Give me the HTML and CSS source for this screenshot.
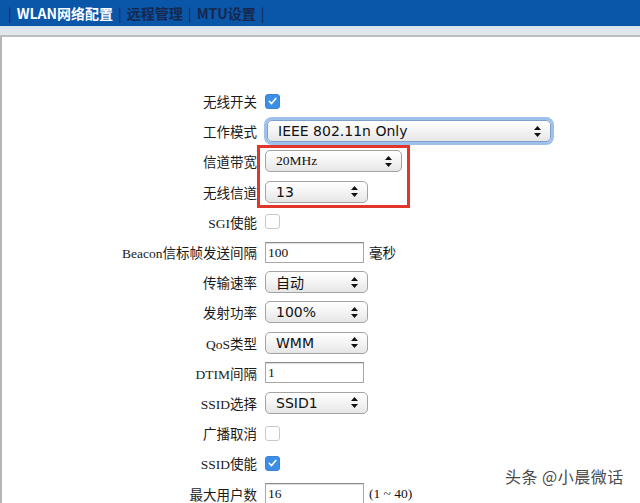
FILE: index.html
```html
<!DOCTYPE html>
<html lang="zh-CN">
<head>
<meta charset="utf-8">
<title>WLAN网络配置</title>
<link rel="stylesheet" href="styles.css">
</head>
<body>
<header class="topbar">
  <span class="sep">|</span><span class="tab active">WLAN网络配置</span><span class="sep">|</span><span class="tab">远程管理</span><span class="sep">|</span><span class="tab">MTU设置</span><span class="sep">|</span>
</header>
<div class="band"></div>
<main class="panel">
  <form class="form">
    <label class="lbl">无线开关</label>
    <div class="ctl"><span class="cb checked"><svg viewBox="0 0 14 14" width="14" height="14"><path d="M3.5 7.3 L6 9.8 L10.6 4.2" fill="none" stroke="#fff" stroke-width="1.7" stroke-linecap="round" stroke-linejoin="round"/></svg></span></div>

    <label class="lbl">工作模式</label>
    <div class="ctl"><div class="sel focus w-mode"><span>IEEE 802.11n Only</span><svg class="arr" viewBox="0 0 7 11" width="7" height="11"><path d="M3.5 0 L7 4 L0 4 Z M3.5 11 L7 7 L0 7 Z" fill="#111"/></svg></div></div>

    <label class="lbl">信道带宽</label>
    <div class="ctl"><div class="sel w-bw serif"><span>20MHz</span><svg class="arr" viewBox="0 0 7 11" width="7" height="11"><path d="M3.5 0 L7 4 L0 4 Z M3.5 11 L7 7 L0 7 Z" fill="#111"/></svg></div></div>

    <label class="lbl">无线信道</label>
    <div class="ctl"><div class="sel w-sm"><span>13</span><svg class="arr" viewBox="0 0 7 11" width="7" height="11"><path d="M3.5 0 L7 4 L0 4 Z M3.5 11 L7 7 L0 7 Z" fill="#111"/></svg></div></div>

    <label class="lbl">SGI使能</label>
    <div class="ctl"><span class="cb"></span></div>

    <label class="lbl">Beacon信标帧发送间隔</label>
    <div class="ctl"><span class="inp">100</span><span class="unit">毫秒</span></div>

    <label class="lbl">传输速率</label>
    <div class="ctl"><div class="sel w-sm"><span>自动</span><svg class="arr" viewBox="0 0 7 11" width="7" height="11"><path d="M3.5 0 L7 4 L0 4 Z M3.5 11 L7 7 L0 7 Z" fill="#111"/></svg></div></div>

    <label class="lbl">发射功率</label>
    <div class="ctl"><div class="sel w-sm"><span>100%</span><svg class="arr" viewBox="0 0 7 11" width="7" height="11"><path d="M3.5 0 L7 4 L0 4 Z M3.5 11 L7 7 L0 7 Z" fill="#111"/></svg></div></div>

    <label class="lbl">QoS类型</label>
    <div class="ctl"><div class="sel w-sm"><span>WMM</span><svg class="arr" viewBox="0 0 7 11" width="7" height="11"><path d="M3.5 0 L7 4 L0 4 Z M3.5 11 L7 7 L0 7 Z" fill="#111"/></svg></div></div>

    <label class="lbl">DTIM间隔</label>
    <div class="ctl"><span class="inp">1</span></div>

    <label class="lbl">SSID选择</label>
    <div class="ctl"><div class="sel w-sm"><span>SSID1</span><svg class="arr" viewBox="0 0 7 11" width="7" height="11"><path d="M3.5 0 L7 4 L0 4 Z M3.5 11 L7 7 L0 7 Z" fill="#111"/></svg></div></div>

    <label class="lbl">广播取消</label>
    <div class="ctl"><span class="cb"></span></div>

    <label class="lbl">SSID使能</label>
    <div class="ctl"><span class="cb checked"><svg viewBox="0 0 14 14" width="14" height="14"><path d="M3.5 7.3 L6 9.8 L10.6 4.2" fill="none" stroke="#fff" stroke-width="1.7" stroke-linecap="round" stroke-linejoin="round"/></svg></span></div>

    <label class="lbl">最大用户数</label>
    <div class="ctl"><span class="inp">16</span><span class="unit">(1 ~ 40)</span></div>
  </form>
  <div class="mark"></div>
</main>
<div class="watermark">头条 @小晨微话</div>
</body>
</html>
```
FILE: styles.css
```css
html, body {
  margin: 0;
  padding: 0;
  background: #fff;
  height: 503px;
  overflow: hidden;
}
body {
  font-family: "Liberation Serif", "Noto Sans CJK SC", serif;
  color: #111;
  position: relative;
}
.topbar {
  height: 26px;
  background: #0a56a8;
  display: flex;
  align-items: center;
  padding-left: 6px;
  font-family: "Noto Sans CJK SC", "Noto Sans", sans-serif;
  font-size: 14px;
  font-weight: 700;
  color: #17284f;
}
.sep {
  padding: 0 5px 0 2px;
  font-weight: 400;
}
.tab { padding-right: 3px; }
.tab.active { color: #fff; }
.band {
  height: 9px;
  background: linear-gradient(#d9e3ee, #e3e7ec);
  border-bottom: 2px solid #bdbdbd;
}
.panel {
  position: relative;
  border-left: 2px solid #b5b5b5;
  height: 466px;
  box-sizing: border-box;
  padding-top: 49px;
}
.form {
  display: grid;
  grid-template-columns: 255px 1fr;
  grid-auto-rows: 30.2px;
  column-gap: 8px;
}
.lbl {
  text-align: right;
  align-self: center;
  font-size: 13.5px;
  color: #1a1a1a;
  white-space: nowrap;
}
.ctl {
  display: flex;
  align-items: center;
  gap: 5px;
}
.cb {
  width: 13px;
  height: 13px;
  border: 1px solid #c9c9c9;
  border-radius: 3px;
  background: #fff;
  display: flex;
  align-items: center;
  justify-content: center;
  box-sizing: content-box;
}
.cb.checked {
  background: #3d8ee6;
  border-color: #3d82d4;
}
.cb svg { display: block; }
.sel {
  height: 22px;
  box-sizing: border-box;
  border: 1px solid #a3a3a3;
  border-radius: 5px;
  background: linear-gradient(#ffffff, #f4f4f4 50%, #e6e6e6);
  display: flex;
  align-items: center;
  justify-content: space-between;
  padding: 0 9px 0 10px;
  font-family: "DejaVu Sans", "Noto Sans CJK SC", sans-serif;
  font-size: 14px;
  color: #111;
}
.sel.serif {
  font-family: "Liberation Serif", "Noto Sans CJK SC", serif;
  font-size: 13.5px;
}
.sel.focus {
  margin-left: 2px;
  box-shadow: 0 0 0 3px #9dc1ec;
  border-color: #7f9fcc;
}
.w-mode { width: 284px; }
.w-bw { width: 137px; }
.w-sm { width: 103px; }
.arr { display: block; }
.inp {
  width: 99px;
  height: 21px;
  box-sizing: border-box;
  border: 1px solid #a8a8a8;
  border-top-color: #8a8a8a;
  box-shadow: inset 0 1px 1px #ddd;
  background: #fff;
  font-size: 13.5px;
  line-height: 19px;
  padding-left: 2px;
}
.unit { font-size: 13.5px; }
.mark {
  position: absolute;
  left: 255px;
  top: 108px;
  width: 153px;
  height: 63px;
  box-sizing: border-box;
  border: 3px solid #e2352b;
}
.watermark {
  position: absolute;
  left: 505px;
  top: 464px;
  font-family: "Noto Sans CJK SC", sans-serif;
  font-size: 16px;
  color: #4a4a4a;
  letter-spacing: 0.5px;
  text-shadow: 0 0 2px #fff, 1px 1px 0 #fff, -1px -1px 0 #fff;
}
```
